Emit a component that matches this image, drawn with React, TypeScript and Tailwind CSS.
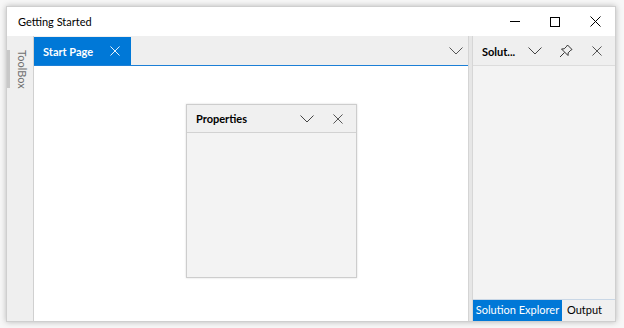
import React from "react";

const font = { fontFamily: 'Lato, "Noto Sans", sans-serif' };

function Chevron({ className = "" }: { className?: string }) {
  return (
    <svg width="14" height="8" viewBox="0 0 14 8" className={className} fill="none" stroke="currentColor" strokeWidth="1">
      <path d="M0.5 0.5 L7 7 L13.5 0.5" />
    </svg>
  );
}

function Close({ size = 11, className = "" }: { size?: number; className?: string }) {
  return (
    <svg width={size} height={size} viewBox="0 0 11 11" className={className} fill="none" stroke="currentColor" strokeWidth="1">
      <path d="M0.5 0.5 L10.5 10.5 M10.5 0.5 L0.5 10.5" />
    </svg>
  );
}

function Pin() {
  return (
    <svg width="14" height="14" viewBox="0 0 14 14" fill="none" stroke="#333" strokeWidth="1">
      <path d="M8.5 1 L13 5.5 L11.8 6.2 L9.2 8.8 L9 11.5 L2.5 5 L5.2 4.8 L7.8 2.2 Z" />
      <path d="M5.5 8.5 L1 13" />
    </svg>
  );
}

export default function App() {
  return (
    <div className="w-[624px] h-[328px] bg-[#f7f7f7] pl-[6px] pr-[8px] pt-[6px] pb-[6px]" style={font}>
      <div className="w-full h-full flex flex-col bg-[#efefef] border border-[#cfcfcf] shadow-[0_0_6px_rgba(0,0,0,0.25)]">
        {/* Title bar */}
        <div className="h-[29px] bg-white flex items-center shrink-0">
          <span className="pl-[11px] pt-px text-[11px] text-black">Getting Started</span>
          <div className="ml-auto flex items-center h-full">
            <div className="w-[40px] h-full flex items-center justify-center">
              <div className="w-[10px] h-px bg-black" />
            </div>
            <div className="w-[40px] h-full flex items-center justify-center">
              <div className="w-[10px] h-[10px] border border-black" />
            </div>
            <div className="w-[40px] h-full flex items-center justify-center text-black">
              <Close size={11} />
            </div>
          </div>
        </div>
        {/* Body */}
        <div className="flex-1 flex min-h-0">
          {/* Toolbox strip */}
          <div className="w-[27px] shrink-0 flex border-r border-[#d0d0d0] bg-[#efefef]">
            <div className="w-[4px] flex flex-col pt-[14px]">
              <div className="h-[38px] w-[3px] bg-[#c8c8c8]" />
            </div>
            <div className="flex-1 flex justify-center pt-[14px]">
              <span className="[writing-mode:vertical-rl] text-[11px] text-[#707070] leading-none">ToolBox</span>
            </div>
          </div>
          {/* Document area */}
          <div className="w-[434px] shrink-0 flex flex-col">
            <div className="h-[30px] shrink-0 flex items-stretch border-b border-[#1c7fd6] bg-[#efefef] pt-px">
              <div className="w-[97px] bg-[#0078d7] flex items-center justify-between pr-[11px] text-white">
                <span className="pl-[9px] pt-[3px] text-[11px] font-bold">Start Page</span>
                <Close size={10} />
              </div>
              <div className="ml-auto flex items-center pr-[5px] text-[#555]">
                <Chevron />
              </div>
            </div>
            <div className="flex-1 bg-white relative">
              {/* Floating Properties window */}
              <div className="absolute left-[152px] top-[38px] w-[171px] h-[174px] flex flex-col border border-[#cdcdcd] bg-[#f3f3f3] shadow-[0_0_2px_rgba(0,0,0,0.15)]">
                <div className="h-[28px] shrink-0 flex items-center border-b border-[#d2d2d2] bg-[#f0f0f0]">
                  <span className="pl-[9px] pt-[2px] text-[11px] font-bold text-black">Properties</span>
                  <div className="ml-auto flex items-center text-[#444]">
                    <Chevron className="mr-[19px]" />
                    <Close size={10} className="mr-[13px]" />
                  </div>
                </div>
                <div className="flex-1" />
              </div>
            </div>
          </div>
          {/* Splitter */}
          <div className="w-[4px] shrink-0 bg-[#e6e6e6] border-l border-[#d4d4d4]" />
          {/* Right pane */}
          <div className="flex-1 flex flex-col border-l border-[#d6d6d6]">
            <div className="h-[30px] shrink-0 flex items-center bg-[#efefef] border-b border-[#dcdcdc]">
              <span className="pl-[9px] pt-[3px] text-[11px] font-bold text-black whitespace-nowrap">Solut...</span>
              <div className="ml-auto flex items-center text-[#444]">
                <Chevron className="mr-[17px]" />
                <div className="mr-[19px]"><Pin /></div>
                <Close size={10} className="mr-[13px]" />
              </div>
            </div>
            <div className="flex-1 bg-[#f3f3f3]" />
            <div className="h-[22px] shrink-0 flex items-stretch bg-[#f0f0f0] border-t border-[#c9d7e6]">
              <div className="w-[89px] bg-[#0078d7] text-white text-[11px] flex items-center justify-center whitespace-nowrap">Solution Explorer</div>
              <div className="text-black text-[11px] flex items-center px-[5px] whitespace-nowrap">Output</div>
            </div>
          </div>
        </div>
      </div>
    </div>
  );
}
